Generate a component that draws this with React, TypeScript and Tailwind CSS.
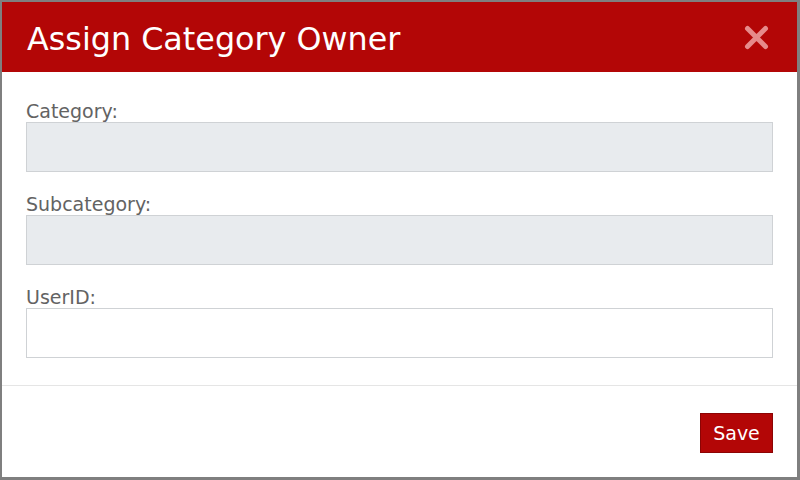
import React from 'react';

const fields = [
  { id: 'category', label: 'Category:', disabled: true },
  { id: 'subcategory', label: 'Subcategory:', disabled: true },
  { id: 'userid', label: 'UserID:', disabled: false },
];

const App: React.FC = () => {
  return (
    <div
      className="w-[800px] h-[480px] flex flex-col bg-white border-t-2 border-l-2 border-r-[3px] border-b-[3px] border-[#7f7f7f]"
      style={{ fontFamily: '"DejaVu Sans", Verdana, sans-serif' }}
    >
      {/* Header */}
      <div className="h-[70px] shrink-0 bg-[#b30606] flex items-center justify-between pl-[25px] pr-[28px]">
        <h1 className="text-[31.8px] leading-none text-white pt-[3px]">Assign Category Owner</h1>
        <button className="w-[26px] h-[26px] flex items-center justify-center">
          <svg width="25" height="25" viewBox="0 0 25 25">
            <path d="M3.5 3.5 L21.5 21.5 M21.5 3.5 L3.5 21.5" stroke="#e68b8b" strokeWidth="5" strokeLinecap="round" />
          </svg>
        </button>
      </div>

      {/* Body */}
      <div className="px-6 pt-[28px] pb-[27px] flex flex-col gap-[21px] border-b border-[#e5e5e5]">
        {fields.map((f) => (
          <div key={f.id} className="flex flex-col">
            <label htmlFor={f.id} className="text-[19px] leading-[22px] text-[#636363]">
              {f.label}
            </label>
            <input
              id={f.id}
              disabled={f.disabled}
              className={`h-[50px] w-full border border-[#cfd2d5] outline-none ${
                f.disabled ? 'bg-[#e8ebee]' : 'bg-white'
              }`}
            />
          </div>
        ))}
      </div>

      {/* Footer */}
      <div className="flex-1 flex justify-end items-start px-6 pt-[27px]">
        <button className="w-[73px] h-[40px] bg-[#b30606] border border-[#8c0404] text-white text-[19px] leading-none">
          Save
        </button>
      </div>
    </div>
  );
};

export default App;
